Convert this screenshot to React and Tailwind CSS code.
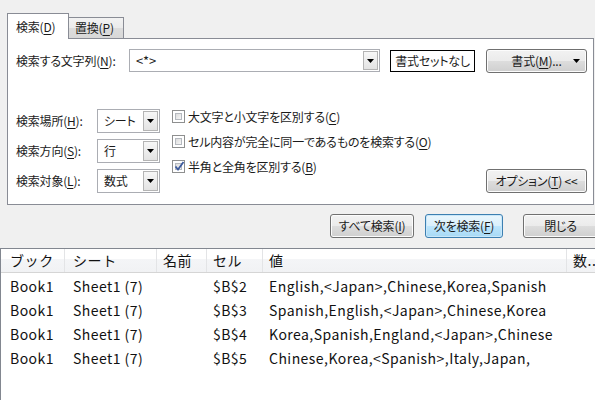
import React from "react";

const Arrow = () => (
  <svg width="7" height="4" viewBox="0 0 7 4">
    <path d="M0 0h7L3.5 4z" fill="#000" />
  </svg>
);

const U = ({ children }) => <span className="underline underline-offset-[2px]">{children}</span>;

const btn =
  "flex h-[24px] items-center justify-center rounded-[3px] border border-[#707070] bg-[linear-gradient(#f2f2f2,#ebebeb_50%,#dddddd_50%,#cfcfcf)] shadow-[inset_0_0_0_1px_#fcfcfc]";

const DropBtn = () => (
  <div className="flex h-full w-[15px] items-center justify-center border border-[#b4b4b4] bg-[linear-gradient(#f7f7f7,#e3e3e3)]">
    <Arrow />
  </div>
);

const Select = ({ value }) => (
  <div className="flex h-[24px] w-[63px] items-center border border-[#abadb3] bg-white p-[1px]">
    <span className="flex-1 pl-[5px]">{value}</span>
    <DropBtn />
  </div>
);

const Check = ({ checked }) => (
  <div className="flex h-[13px] w-[13px] items-center justify-center border border-[#8e8f8f] bg-white p-[2px]">
    <div className="relative h-full w-full border border-[#b5b9bf] bg-[linear-gradient(135deg,#dcdcdc,#f6f6f6)]">
      {checked && (
        <svg className="absolute left-[-2px] top-[-3px]" width="11" height="11" viewBox="0 0 11 11">
          <path d="M1.5 5.5l2.5 3 5.5-7.5" stroke="#3d5a9c" strokeWidth="1.8" fill="none" />
        </svg>
      )}
    </div>
  </div>
);

const rows = [
  ["$B$2", "English,<Japan>,Chinese,Korea,Spanish"],
  ["$B$3", "Spanish,English,<Japan>,Chinese,Korea"],
  ["$B$4", "Korea,Spanish,England,<Japan>,Chinese"],
  ["$B$5", "Chinese,Korea,<Spanish>,Italy,Japan,"],
];

export default function App() {
  return (
    <div className="flex h-[400px] w-[595px] flex-col overflow-hidden bg-[#f0f0f0] font-['Noto_Sans_CJK_JP',sans-serif] text-[12px] tracking-[-0.2px] text-[#1a1a1a] [font-feature-settings:'palt']">
      {/* tabs */}
      <div className="flex items-end pl-[7px] pt-[13px]">
        <div className="relative z-10 -mb-px flex h-[26px] w-[62px] items-center border border-b-0 border-[#898c95] bg-white pl-[8px]">
          検索(<U>D</U>)
        </div>
        <div className="flex h-[21px] w-[55px] items-center border border-b-0 border-l-0 border-[#898c95] bg-[linear-gradient(#f2f2f2,#ebebeb_50%,#dddddd_50%,#d8d8d8)] pl-[6px]">
          置換(<U>P</U>)
        </div>
      </div>

      {/* panel */}
      <div className="ml-[7px] flex h-[167px] w-[587px] flex-col border border-[#898c95] bg-white pl-[8px]">
        <div className="mt-[10px] flex h-[23px] items-center">
          <div className="w-[113px]">
            検索する文字列(<U>N</U>):
          </div>
          <div className="flex h-[23px] w-[251px] items-center border border-[#abadb3] p-[1px]">
            <span className="flex-1 pl-[5px] text-[13px]">&lt;*&gt;</span>
            <DropBtn />
          </div>
          <div className="ml-[10px] flex h-[22px] w-[85px] items-center justify-center border border-black">
            書式セットなし
          </div>
          <div className={btn + " relative ml-[11px] h-[23px] w-[101px]"}>
            書式(<U>M</U>)...
            <span className="absolute right-[6px] top-[9px]">
              <Arrow />
            </span>
          </div>
        </div>

        <div className="mt-[32px] flex flex-1">
          <div className="flex flex-col gap-[6px] pt-[5px]">
            {[
              ["検索場所", "H", "シート"],
              ["検索方向", "S", "行"],
              ["検索対象", "L", "数式"],
            ].map(([l, k, v]) => (
              <div key={k} className="flex items-center">
                <div className="w-[81px]">
                  {l}(<U>{k}</U>):
                </div>
                <Select value={v} />
              </div>
            ))}
          </div>
          <div className="ml-[12px] flex flex-col">
            {[
              ["大文字と小文字を区別する", "C", false],
              ["セル内容が完全に同一であるものを検索する", "O", false],
              ["半角と全角を区別する", "B", true],
            ].map(([l, k, c]) => (
              <div key={k} className="flex h-[25px] items-center gap-[3px]">
                <Check checked={c} />
                <span>
                  {l}(<U>{k}</U>)
                </span>
              </div>
            ))}
          </div>
          <div className={btn + " mb-[11px] ml-auto mr-[6px] h-[23px] w-[101px] self-end"}>
            オプション(<U>T</U>)&nbsp;&lt;&lt;
          </div>
        </div>
      </div>

      {/* buttons */}
      <div className="-mr-[3px] flex h-[43px] items-start justify-end gap-[11px] pt-[9px]">
        <div className={btn + " w-[84px]"}>
          すべて検索(<U>I</U>)
        </div>
        <div className="flex h-[24px] w-[78px] items-center justify-center rounded-[3px] border border-[#3c7fb1] bg-[linear-gradient(#eaf6fd,#d9f0fc_50%,#bee6fd_50%,#a7d9f5)] shadow-[inset_0_0_0_1px_#c9e7f9]">
          次を検索(<U>F</U>)
        </div>
        <div className={btn + " ml-[9px] w-[75px]"}>閉じる</div>
      </div>

      {/* results */}
      <div className="flex-1 border-l border-t border-[#828790] bg-white text-[14px] tracking-[0.45px] text-[#111] [font-feature-settings:normal]">
        <div className="grid h-[24px] grid-cols-[64px_92px_50px_56px_304px_1fr] border-b border-[#d5d5d5] bg-[linear-gradient(#ffffff,#ffffff_45%,#f4f5f7_45%,#f1f2f4)] tracking-[0.6px]">
          <div className="border-r border-[#e3e4e6] pl-[9px] leading-[23px]">ブック</div>
          <div className="border-r border-[#e3e4e6] pl-[8px] leading-[23px]">シート</div>
          <div className="border-r border-[#e3e4e6] pl-[6px] leading-[23px]">名前</div>
          <div className="border-r border-[#e3e4e6] pl-[6px] leading-[23px]">セル</div>
          <div className="border-r border-[#e3e4e6] pl-[6px] leading-[23px]">値</div>
          <div className="whitespace-nowrap pl-[6px] leading-[23px]">数..</div>
        </div>
        <div className="pt-[1px]">
          {rows.map(([c, v]) => (
            <div key={c} className="grid h-[24px] grid-cols-[64px_92px_50px_56px_304px_1fr] items-center whitespace-nowrap">
              <div className="pl-[9px]">Book1</div>
              <div className="pl-[8px]">Sheet1 (7)</div>
              <div />
              <div className="pl-[6px]">{c}</div>
              <div className="pl-[6px]">{v}</div>
              <div />
            </div>
          ))}
        </div>
      </div>
    </div>
  );
}
